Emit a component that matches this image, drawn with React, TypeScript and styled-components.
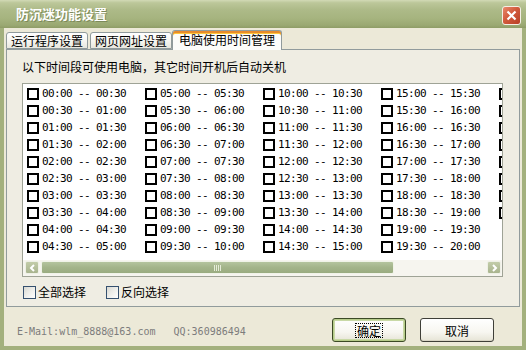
import React from "react";
import styled, { createGlobalStyle } from "styled-components";

const CJK = `"Noto Sans CJK SC", "Noto Sans", sans-serif`;
const MONO = `"DejaVu Sans Mono", "Liberation Mono", monospace`;

const GlobalStyle = createGlobalStyle`
  html, body { margin: 0; padding: 0; }
  body {
    width: 526px;
    height: 350px;
    overflow: hidden;
    background: #ece9d8;
    font-family: ${CJK};
  }
`;

const Window = styled.div`
  width: 526px;
  height: 350px;
  display: flex;
  flex-direction: column;
  box-sizing: border-box;
`;

const TitleBar = styled.div`
  height: 28px;
  flex: none;
  display: flex;
  align-items: center;
  justify-content: space-between;
  box-sizing: border-box;
  padding: 0 5px 0 16px;
  background: linear-gradient(
    to bottom,
    #d2dab6 0%,
    #bcc79a 10%,
    #adba88 35%,
    #a6b47f 65%,
    #9aa872 90%,
    #8e9c66 100%
  );
`;

const TitleText = styled.span`
  color: #ffffff;
  font-family: ${CJK};
  font-size: 13px;
  font-weight: bold;
  line-height: 16px;
  text-shadow: 1px 1px 0 #7d8a5a;
`;

const CloseButton = styled.div`
  width: 19px;
  height: 19px;
  margin-top: 3px;
  box-sizing: border-box;
  border: 1px solid #f4efe6;
  border-radius: 3px;
  background: linear-gradient(135deg, #e98a6d 0%, #d25a3c 45%, #b83f25 100%);
  display: flex;
  align-items: center;
  justify-content: center;
`;

const Frame = styled.div`
  flex: 1;
  display: flex;
  flex-direction: column;
  box-sizing: border-box;
  border: 4px solid #a3b07d;
  border-top: none;
  background: #ece9d8;
  padding: 2px 2px 0 2px;
`;

const TabStrip = styled.div`
  height: 19px;
  flex: none;
  display: flex;
  align-items: flex-end;
  gap: 2px;
  position: relative;
  z-index: 1;
  margin-bottom: -1px;
  padding-bottom: 1px;
  box-sizing: content-box;
`;

const Tab = styled.div<{ $active?: boolean }>`
  box-sizing: border-box;
  height: ${(p) => (p.$active ? "20px" : "17px")};
  margin: ${(p) => (p.$active ? "0 -2px -1px -2px" : "0")};
  padding: ${(p) => (p.$active ? "1px 6px 0" : "0 4px")};
  border: 1px solid #919b9c;
  border-bottom: ${(p) => (p.$active ? "none" : "1px solid #919b9c")};
  border-radius: 3px 3px 0 0;
  background: ${(p) =>
    p.$active
      ? "#fcfcfa"
      : "linear-gradient(to bottom, #ffffff 0%, #f6f5f0 55%, #e8e7de 100%)"};
  box-shadow: ${(p) =>
    p.$active ? "inset 0 2px 0 #e68b2c, inset 0 3px 0 #ffc73c" : "none"};
  font-family: ${CJK};
  font-size: 12px;
  line-height: 16px;
  color: #000;
  white-space: nowrap;
`;

const Panel = styled.div`
  height: 258px;
  flex: none;
  box-sizing: border-box;
  border: 1px solid #919b9c;
  background: #efede3;
  padding: 9px 16px 0 15px;
  display: flex;
  flex-direction: column;
`;

const Instruction = styled.div`
  font-family: ${CJK};
  font-size: 12px;
  line-height: 16px;
  color: #000;
  white-space: nowrap;
`;

const ListBox = styled.div`
  margin-top: 8px;
  width: 481px;
  height: 194px;
  box-sizing: border-box;
  border: 1px solid #9fa396;
  background: #ffffff;
  display: flex;
  flex-direction: column;
  overflow: hidden;
`;

const Grid = styled.div`
  display: grid;
  grid-auto-flow: column;
  grid-template-rows: repeat(10, 17px);
  grid-auto-columns: 118px;
  padding: 1px 0 0 4px;
  overflow: hidden;
`;

const Item = styled.div`
  display: flex;
  align-items: center;
  gap: 3px;
  font-family: ${MONO};
  font-size: 11px;
  letter-spacing: -0.62px;
  color: #000;
  white-space: pre;
`;

const ItemBox = styled.span`
  width: 12px;
  height: 12px;
  flex: none;
  box-sizing: border-box;
  border: 2px solid #000;
  background: #fff;
`;

const ScrollBar = styled.div`
  margin-top: auto;
  height: 15px;
  flex: none;
  display: flex;
  align-items: center;
  gap: 2px;
  padding: 0 1px 1px 2px;
  background: #f6f5ef;
`;

const ArrowButton = styled.div`
  width: 14px;
  height: 13px;
  flex: none;
  box-sizing: border-box;
  border: 1px solid #eef0e6;
  border-radius: 2px;
  background: linear-gradient(to bottom, #c2cca9 0%, #a9b48e 100%);
  display: flex;
  align-items: center;
  justify-content: center;
`;

const Thumb = styled.div`
  width: 353px;
  height: 13px;
  flex: none;
  box-sizing: border-box;
  border: 1px solid #f0f3e8;
  border-radius: 2px;
  background: linear-gradient(to bottom, #b4c49e 0%, #a3b48a 50%, #9aac80 100%);
  display: flex;
  align-items: center;
  justify-content: center;
`;

const Track = styled.div`
  flex: 1;
  height: 13px;
`;

const CheckRow = styled.div`
  margin-top: 7px;
  height: 16px;
  display: flex;
  align-items: center;
  gap: 20px;
  padding-left: 1px;
`;

const CheckLabel = styled.label`
  display: flex;
  align-items: center;
  gap: 2px;
  font-family: ${CJK};
  font-size: 12px;
  line-height: 16px;
  color: #000;
  white-space: nowrap;
`;

const XpBox = styled.span`
  width: 13px;
  height: 13px;
  flex: none;
  box-sizing: border-box;
  border: 1px solid #35506f;
  background: linear-gradient(135deg, #d8d8d2 0%, #ecece8 45%, #ffffff 100%);
`;

const Footer = styled.div`
  flex: 1;
  display: flex;
  align-items: flex-start;
  padding: 11px 26px 0 11px;
`;

const Contact = styled.div`
  margin-top: 8px;
  margin-right: auto;
  font-family: ${MONO};
  font-size: 10px;
  line-height: 12px;
  color: #7c7c7c;
  white-space: pre;
`;

const Buttons = styled.div`
  display: flex;
  gap: 14px;
`;

const Button = styled.div<{ $default?: boolean }>`
  width: 74px;
  height: 24px;
  box-sizing: border-box;
  border: 1px solid ${(p) => (p.$default ? "#3b4a25" : "#3f3f38")};
  border-radius: 3px;
  background: linear-gradient(to bottom, #ffffff 0%, #f7f6f0 60%, #e6e4d6 100%);
  box-shadow: ${(p) =>
    p.$default ? "inset 0 0 0 1px #b6cc8a, inset 0 0 0 2px #c9d9a6" : "inset 0 -1px 0 #d8d5c6"};
  display: flex;
  align-items: center;
  justify-content: center;
  font-family: ${CJK};
  font-size: 12px;
  color: #000;
`;

const FocusText = styled.span`
  border: 1px dotted #000;
  padding: 0 1px;
  line-height: 13px;
`;

const pad = (n: number) => String(n).padStart(2, "0");
const slots: string[] = [];
for (let i = 0; i < 48; i++) {
  const a = i * 30;
  const b = a + 30;
  const fmt = (m: number) => `${pad(Math.floor(m / 60) % 24)}:${pad(m % 60)}`;
  slots.push(`${fmt(a)} -- ${b === 1440 ? "24:00" : fmt(b)}`);
}

const Chevron = ({ dir }: { dir: "left" | "right" }) => (
  <svg width="7" height="8" viewBox="0 0 7 8">
    <path
      d={dir === "left" ? "M5 1 L2 4 L5 7" : "M2 1 L5 4 L2 7"}
      fill="none"
      stroke="#ffffff"
      strokeWidth="2"
    />
  </svg>
);

const Grip = () => (
  <svg width="8" height="6" viewBox="0 0 8 6">
    {[0, 2, 4, 6].map((x) => (
      <rect key={x} x={x} y="0" width="1" height="6" fill="#e6ecd9" />
    ))}
  </svg>
);

export default function App() {
  return (
    <>
      <GlobalStyle />
      <Window>
        <TitleBar>
          <TitleText>防沉迷功能设置</TitleText>
          <CloseButton>
            <svg width="11" height="11" viewBox="0 0 11 11">
              <path d="M1.5 1.5 L9.5 9.5 M9.5 1.5 L1.5 9.5" stroke="#fff" strokeWidth="2.2" />
            </svg>
          </CloseButton>
        </TitleBar>
        <Frame>
          <TabStrip>
            <Tab>运行程序设置</Tab>
            <Tab>网页网址设置</Tab>
            <Tab $active>电脑使用时间管理</Tab>
          </TabStrip>
          <Panel>
            <Instruction>以下时间段可使用电脑，其它时间开机后自动关机</Instruction>
            <ListBox>
              <Grid>
                {slots.map((s) => (
                  <Item key={s}>
                    <ItemBox />
                    {s}
                  </Item>
                ))}
              </Grid>
              <ScrollBar>
                <ArrowButton>
                  <Chevron dir="left" />
                </ArrowButton>
                <Thumb>
                  <Grip />
                </Thumb>
                <Track />
                <ArrowButton>
                  <Chevron dir="right" />
                </ArrowButton>
              </ScrollBar>
            </ListBox>
            <CheckRow>
              <CheckLabel>
                <XpBox />
                全部选择
              </CheckLabel>
              <CheckLabel>
                <XpBox />
                反向选择
              </CheckLabel>
            </CheckRow>
          </Panel>
          <Footer>
            <Contact>{"E-Mail:wlm_8888@163.com   QQ:360986494"}</Contact>
            <Buttons>
              <Button $default>
                <FocusText>确定</FocusText>
              </Button>
              <Button>取消</Button>
            </Buttons>
          </Footer>
        </Frame>
      </Window>
    </>
  );
}
